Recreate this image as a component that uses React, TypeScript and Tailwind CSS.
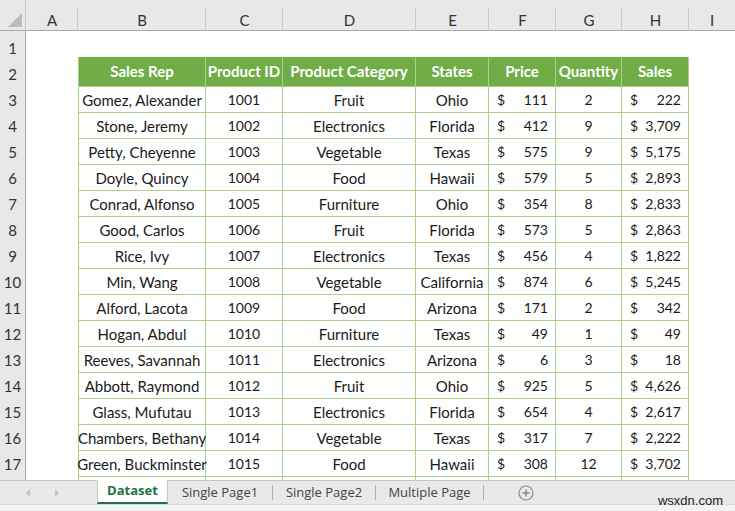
import type { ReactNode } from 'react';

type Row = [string, string, string, string, string, string, string];

const ROWS: Row[] = [
  ['Gomez, Alexander', '1001', 'Fruit', 'Ohio', '111', '2', '222'],
  ['Stone, Jeremy', '1002', 'Electronics', 'Florida', '412', '9', '3,709'],
  ['Petty, Cheyenne', '1003', 'Vegetable', 'Texas', '575', '9', '5,175'],
  ['Doyle, Quincy', '1004', 'Food', 'Hawaii', '579', '5', '2,893'],
  ['Conrad, Alfonso', '1005', 'Furniture', 'Ohio', '354', '8', '2,833'],
  ['Good, Carlos', '1006', 'Fruit', 'Florida', '573', '5', '2,863'],
  ['Rice, Ivy', '1007', 'Electronics', 'Texas', '456', '4', '1,822'],
  ['Min, Wang', '1008', 'Vegetable', 'California', '874', '6', '5,245'],
  ['Alford, Lacota', '1009', 'Food', 'Arizona', '171', '2', '342'],
  ['Hogan, Abdul', '1010', 'Furniture', 'Texas', '49', '1', '49'],
  ['Reeves, Savannah', '1011', 'Electronics', 'Arizona', '6', '3', '18'],
  ['Abbott, Raymond', '1012', 'Fruit', 'Ohio', '925', '5', '4,626'],
  ['Glass, Mufutau', '1013', 'Electronics', 'Florida', '654', '4', '2,617'],
  ['Chambers, Bethany', '1014', 'Vegetable', 'Texas', '317', '7', '2,222'],
  ['Green, Buckminster', '1015', 'Food', 'Hawaii', '308', '12', '3,702'],
];

const HEADERS = ['Sales Rep', 'Product ID', 'Product Category', 'States', 'Price', 'Quantity', 'Sales'];
const LETTERS = ['A', 'B', 'C', 'D', 'E', 'F', 'G', 'H', 'I'];

const GRID = 'grid grid-cols-[26px_52px_128px_77px_133px_73px_67px_66px_67px_1fr]';

function RowHead({ n }: { n?: number }) {
  return (
    <div className="flex items-center justify-center border-r border-b border-r-[#ababab] border-b-[#d0d0d0] bg-[#e8e8e8] pt-[6px] text-[15px] text-[#333]">
      {n}
    </div>
  );
}

// numbers render a touch smaller: Lato digits run wider than the sheet's font
function Cell({ children, first, num }: { children?: ReactNode; first?: boolean; num?: boolean }) {
  return (
    <div
      className={`flex items-center justify-center overflow-visible whitespace-nowrap border-r border-b border-[#a9d08e] pt-[5px] ${
        first ? 'border-l' : ''
      } ${num ? 'text-[14px]' : ''}`}
    >
      {children}
    </div>
  );
}

function Money({ v }: { v: string }) {
  return (
    <div className="flex items-center justify-between border-r border-b border-[#a9d08e] pt-[5px] pl-[8px] pr-[7px] text-[14px]">
      <span>$</span>
      <span>{v}</span>
    </div>
  );
}

function TabArrow({ dir }: { dir: 'l' | 'r' }) {
  return (
    <svg width="8" height="10" viewBox="0 0 8 10">
      <path d={dir === 'l' ? 'M6 1 L2 5 L6 9 Z' : 'M2 1 L6 5 L2 9 Z'} fill="#c4c4c4" />
    </svg>
  );
}

export default function App() {
  return (
    <div className="relative flex h-[511px] w-[735px] flex-col overflow-hidden bg-white font-['Lato',sans-serif] text-[#1a1a1a]">
      {/* column headers */}
      <div className={`${GRID} h-[31px] shrink-0 border-b border-[#ababab] bg-[#e8e8e8]`}>
        <div className="relative border-r border-[#c8c8c8]">
          <svg className="absolute left-[8px] top-[13px]" width="14" height="14" viewBox="0 0 14 14">
            <path d="M14 0 L14 14 L0 14 Z" fill="#bdbdbd" />
          </svg>
        </div>
        {LETTERS.map((l) => (
          <div key={l} className="relative flex items-end justify-center text-[15px] text-[#333]">
            <span className="translate-y-[1px]">{l}</span>
            {l !== 'I' && <span className="absolute right-0 bottom-0 h-[22px] border-r border-[#c8c8c8]" />}
          </div>
        ))}
      </div>

      {/* sheet */}
      <div className="h-[449px] shrink-0 overflow-hidden text-[15px]">
        <div className={`${GRID} h-[26px]`}>
          <RowHead n={1} />
        </div>
        <div className={`${GRID} h-[26px]`}>
          <RowHead n={2} />
          <div />
          {HEADERS.map((h, i) => (
            <div
              key={h}
              className={`flex items-center justify-center whitespace-nowrap border-r border-b border-[#a9d08e] bg-[#70ad47] font-bold text-white ${
                i === 0 ? 'border-l' : ''
              }`}
            >
              {h}
            </div>
          ))}
        </div>
        {ROWS.map((r, i) => (
          <div key={r[1]} className={`${GRID} h-[26px]`}>
            <RowHead n={i + 3} />
            <div />
            <Cell first>{r[0]}</Cell>
            <Cell num>{r[1]}</Cell>
            <Cell>{r[2]}</Cell>
            <Cell>{r[3]}</Cell>
            <Money v={r[4]} />
            <Cell num>{r[5]}</Cell>
            <Money v={r[6]} />
          </div>
        ))}
        {/* row 18, mostly hidden behind the tab bar */}
        <div className={`${GRID} h-[26px]`}>
          <RowHead />
          <div />
          <Cell first />
          <Cell />
          <Cell />
          <Cell />
          <Cell />
          <Cell />
          <Cell />
        </div>
      </div>

      {/* sheet tabs */}
      <div className="flex h-[24px] shrink-0 items-stretch border-t border-[#c6c6c6] bg-[#e9e9e9] font-['Open_Sans',sans-serif] text-[13px] text-[#444]">
        <div className="flex w-[97px] items-center gap-[21px] pl-[24px]">
          <TabArrow dir="l" />
          <TabArrow dir="r" />
        </div>
        <div className="-mt-px flex w-[71px] items-center justify-center border-x border-[#c6c6c6] border-b-2 border-b-[#217346] bg-white font-bold text-[#217346]">
          Dataset
        </div>
        <div className="flex w-[104px] items-center justify-center">Single Page1</div>
        <div className="my-[4px] border-l border-[#b0b0b0]" />
        <div className="flex w-[102px] items-center justify-center">Single Page2</div>
        <div className="my-[4px] border-l border-[#b0b0b0]" />
        <div className="flex w-[107px] items-center justify-center">Multiple Page</div>
        <div className="my-[4px] border-l border-[#b0b0b0]" />
        <div className="flex w-[84px] items-center justify-center">
          <svg width="16" height="16" viewBox="0 0 16 16">
            <circle cx="8" cy="8" r="7" fill="none" stroke="#8a8a8a" strokeWidth="1.2" />
            <path d="M8 4.5 V11.5 M4.5 8 H11.5" stroke="#8a8a8a" strokeWidth="1.4" />
          </svg>
        </div>
      </div>
      <div className="flex-1 border-t border-[#dadada] bg-[#f3f3f3]" />

      <span className="absolute right-[12px] bottom-[1px] font-['Liberation_Sans',sans-serif] text-[13px] text-[#222]">
        wsxdn.com
      </span>
    </div>
  );
}
